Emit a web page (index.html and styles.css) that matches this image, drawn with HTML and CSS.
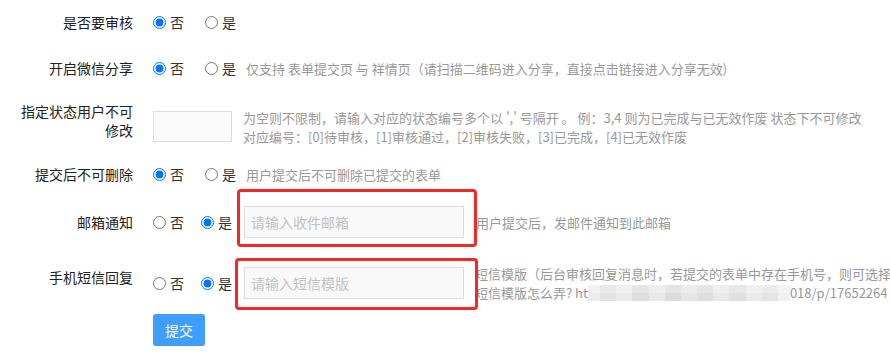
FILE: index.html
```html
<!DOCTYPE html>
<html lang="zh-CN">
<head>
<meta charset="utf-8">
<title>表单设置</title>
<link rel="stylesheet" href="styles.css">
</head>
<body>
<div class="form">
  <div class="row r1">
    <div class="label">是否要审核</div>
    <label class="opt"><input type="radio" name="a" checked>否</label>
    <label class="opt last"><input type="radio" name="a">是</label>
  </div>

  <div class="row r2">
    <div class="label">开启微信分享</div>
    <label class="opt"><input type="radio" name="b" checked>否</label>
    <label class="opt last"><input type="radio" name="b">是</label>
    <span class="hint">仅支持 表单提交页 与 祥情页（请扫描二维码进入分享，直接点击链接进入分享无效)</span>
  </div>

  <div class="row r3">
    <div class="label">指定状态用户不可修改</div>
    <input class="small" type="text">
    <div class="hint multi">为空则不限制，请输入对应的状态编号多个以 ',' 号隔开 。 例：3,4 则为已完成与已无效作废 状态下不可修改<br>对应编号：[0]待审核，[1]审核通过，[2]审核失败，[3]已完成，[4]已无效作废</div>
  </div>

  <div class="row r4">
    <div class="label">提交后不可删除</div>
    <label class="opt"><input type="radio" name="c" checked>否</label>
    <label class="opt last"><input type="radio" name="c">是</label>
    <span class="hint">用户提交后不可删除已提交的表单</span>
  </div>

  <div class="row r5">
    <div class="label">邮箱通知</div>
    <label class="opt tight"><input type="radio" name="d">否</label>
    <label class="opt tight last2"><input type="radio" name="d" checked>是</label>
    <span class="mark mark-email"><input class="text" type="text" placeholder="请输入收件邮箱"></span>
    <span class="hint gap">用户提交后，发邮件通知到此邮箱</span>
  </div>

  <div class="row r6">
    <div class="label lbl6">手机短信回复</div>
    <label class="opt tight"><input type="radio" name="e">否</label>
    <label class="opt tight last2"><input type="radio" name="e" checked>是</label>
    <span class="mark mark-sms"><input class="text" type="text" placeholder="请输入短信模版"></span>
    <div class="hint gap2">短信模版（后台审核回复消息时，若提交的表单中存在手机号，则可选择此模版回复消息）<br>短信模版怎么弄? ht<span class="mosaic"></span>018/p/17652264</div>
  </div>

  <div class="row r7">
    <div class="label"></div>
    <button class="btn" type="button">提交</button>
  </div>
</div>
</body>
</html>
```

FILE: styles.css
```css
html, body {
  margin: 0;
  padding: 0;
  background: #fff;
  overflow: hidden;
}
body {
  width: 890px;
  height: 361px;
  font-family: "Noto Sans CJK SC", "Noto Sans", sans-serif;
  font-size: 14px;
  color: #333;
}
.form {
  display: flex;
  flex-direction: column;
  padding-top: 6px;
}
.row {
  display: flex;
  align-items: center;
  min-height: 32px;
  white-space: nowrap;
}
.r2 { margin-top: 14px; }
.r3 { margin-top: 18px; align-items: flex-start; }
.r4 { margin-top: 12px; }
.r5 { margin-top: 16px; }
.r6 { margin-top: 26px; }
.r7 { margin-top: 12px; }

.label {
  flex: none;
  width: 125px;
  margin-left: 8px;
  margin-right: 20px;
  text-align: right;
  line-height: 19px;
  white-space: normal;
  color: #222;
}
.lbl6 { align-self: flex-start; margin-top: 4px; }

.opt {
  display: inline-flex;
  align-items: center;
  margin-right: 21px;
  line-height: 19px;
}
.opt input {
  margin: 0 4px 0 0;
  width: 13px;
  height: 13px;
}
.opt.last { margin-right: 10px; }
.opt.tight { margin-right: 17px; }
.opt.tight.last2 { margin-right: 12px; }

.hint {
  font-size: 13px;
  color: #999;
  line-height: 19px;
}
.hint.multi { margin-top: 6px; }
.hint.gap { margin-left: 12px; }
.hint.gap2 { margin-left: 11px; }

.small {
  box-sizing: border-box;
  width: 79px;
  height: 31px;
  margin: 9px 11px 0 0;
  border: 1px solid #ddd;
  background: #fafafa;
  padding: 0 6px;
}

.mark {
  position: relative;
  display: inline-flex;
}
.mark::after {
  content: "";
  position: absolute;
  border: 3px solid #f52727;
  border-radius: 4px;
  pointer-events: none;
}
.mark-email::after { top: -17px; bottom: -9px; left: -7px; right: -13px; }
.mark-sms::after { top: -9px; bottom: -11px; left: -9px; right: -14px; }

.text {
  box-sizing: border-box;
  width: 220px;
  height: 32px;
  border: 1px solid #ddd;
  background: #f9f9f9;
  padding: 0 6px;
  font-family: inherit;
  font-size: 14px;
  color: #333;
  outline: none;
}
.text::placeholder { color: #c2c2c2; }

.mosaic {
  display: inline-block;
  width: 202px;
  height: 16px;
  vertical-align: -3px;
  background:
    linear-gradient(180deg, rgba(255,255,255,0.25) 0 50%, rgba(0,0,0,0) 50% 100%),
    linear-gradient(90deg,
      #ececec 0 6%, #e2e2e2 6% 14%, #ebebeb 14% 22%, #dedede 22% 30%,
      #e8e8e8 30% 38%, #dcdcdc 38% 46%, #e6e6e6 46% 54%, #dedede 54% 62%,
      #e9e9e9 62% 70%, #e0e0e0 70% 78%, #ebebeb 78% 86%, #e4e4e4 86% 94%, #f0f0f0 94% 100%);
}

.btn {
  width: 52px;
  height: 32px;
  border: none;
  border-radius: 3px;
  background: #409eff;
  color: #fff;
  font-family: inherit;
  font-size: 14px;
  padding: 0;
}
```
